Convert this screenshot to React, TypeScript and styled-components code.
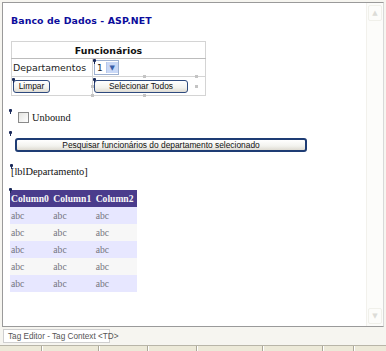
import styled, { createGlobalStyle } from "styled-components";

const Global = createGlobalStyle`
  html, body { margin: 0; padding: 0; }
  body { width: 386px; height: 351px; overflow: hidden; background: #f6f5f0; }
`;

const Window = styled.div`
  width: 386px;
  height: 351px;
  display: flex;
  flex-direction: column;
  box-sizing: border-box;
  padding: 2px 2px 0 2px;
`;

const Editor = styled.div`
  height: 325px;
  box-sizing: border-box;
  border: 1px solid #9a9a9a;
  border-right-color: #d8d8d8;
  background: #fff;
  display: flex;
`;

const Document = styled.div`
  flex: 1;
  padding: 12px 0 0 7px;
  display: flex;
  flex-direction: column;
  align-items: flex-start;
  font-family: "Liberation Serif", serif;
`;

const Scrollbar = styled.div`
  width: 16px;
  background: #fcfcfa;
  border-left: 1px solid #f2f1ec;
  display: flex;
  flex-direction: column;
  justify-content: space-between;
  padding: 2px 0;
`;

const ScrollArrow = styled.div`
  height: 14px;
  margin: 0 1px;
  border: 1px solid #f0f0ea;
  border-radius: 2px;
  display: flex;
  align-items: center;
  justify-content: center;
  color: #dcdcd8;
  font-size: 7px;
  font-family: "DejaVu Sans", sans-serif;
`;

const Title = styled.h1`
  margin: 0;
  font-family: "DejaVu Sans", sans-serif;
  font-size: 9.4px;
  line-height: 12px;
  font-weight: bold;
  letter-spacing: 0.1px;
  color: #0c0c9c;
  padding-left: 1px;
`;

const Anchor = styled.div`
  position: relative;
`;

const Marker = styled.span<{ $x?: number; $y?: number }>`
  position: absolute;
  left: ${p => p.$x ?? -2}px;
  top: ${p => p.$y ?? -3}px;
  width: 3px;
  height: 3px;
  background: #1a2a5a;
  border-radius: 1px;
  &::after {
    content: "";
    position: absolute;
    left: 1px;
    top: 2px;
    width: 1px;
    height: 3px;
    background: #1a2a5a;
  }
`;

const Handle = styled.span<{ $x: number; $y: number }>`
  position: absolute;
  left: ${p => p.$x}px;
  top: ${p => p.$y}px;
  width: 3px;
  height: 3px;
  background: #c4c4c4;
`;

const FormTable = styled.table`
  margin-top: 14px;
  margin-left: 1px;
  width: 195px;
  border-collapse: collapse;
  border: 1px solid #c4c4c4;
  font-family: "DejaVu Sans", sans-serif;
  font-size: 9.4px;
  color: #222;
`;

const Cell = styled.td<{ $h: number }>`
  border: 1px solid #d4d4d4;
  height: ${p => p.$h}px;
  padding: 0 1px;
  position: relative;
  vertical-align: middle;
`;

const HeadCell = styled(Cell)`
  text-align: center;
  font-weight: bold;
  color: #111;
  border-bottom-color: #bcbcbc;
`;

const Select = styled.div`
  display: inline-flex;
  align-items: center;
  height: 13px;
  border: 1px solid #9db0d0;
  background: #fff;
  font-size: 9px;
  padding-left: 2px;
  gap: 3px;
`;

const SelectArrow = styled.span`
  width: 11px;
  height: 11px;
  background: #c9d8f6;
  border-left: 1px solid #b5c6ea;
  color: #3a5ea8;
  font-size: 7px;
  display: flex;
  align-items: center;
  justify-content: center;
`;

const Button = styled.button<{ $w: number; $focus?: boolean }>`
  width: ${p => p.$w}px;
  height: ${p => (p.$focus ? 14 : 13)}px;
  margin: 0;
  padding: 0;
  box-sizing: border-box;
  font-family: "Liberation Sans", sans-serif;
  font-size: 8.4px;
  line-height: 10px;
  color: #111;
  background: linear-gradient(#ffffff, #f2f2ee 60%, #dedbd2);
  border: ${p => (p.$focus ? "2px solid #1e3c74" : "1px solid #2e4a7e")};
  border-radius: 3px;
`;

const CheckRow = styled.label`
  margin-top: 16px;
  margin-left: 8px;
  display: flex;
  align-items: center;
  gap: 3px;
  font-size: 10.4px;
  color: #111;
`;

const Box = styled.span`
  width: 9px;
  height: 9px;
  border: 1px solid #8a8a8a;
  background: linear-gradient(135deg, #e4e4e0, #ffffff);
`;

const WideRow = styled.div`
  margin-top: 11px;
  margin-left: 5px;
`;

const LabelText = styled.div`
  margin-top: 14px;
  margin-left: 1px;
  font-size: 10.4px;
  line-height: 12px;
  color: #111;
`;

const Grid = styled.table`
  margin-top: 12px;
  margin-left: 0;
  border-collapse: collapse;
  width: 127px;
  font-family: "Liberation Serif", serif;
  font-size: 9.6px;
`;

const GridHead = styled.th`
  background: #4a3c8c;
  color: #f7f7f7;
  font-weight: bold;
  height: 17px;
  padding: 0 1px;
  text-align: left;
  white-space: nowrap;
`;

const GridRow = styled.tr<{ $alt: boolean }>`
  background: ${p => (p.$alt ? "#f7f7f7" : "#e7e7ff")};
  color: #74747e;
`;

const GridCell = styled.td`
  height: 17px;
  padding: 0 1px;
`;

const TagBar = styled.div`
  height: 18px;
  display: flex;
  align-items: center;
  padding-left: 1px;
`;

const TagBox = styled.div`
  height: 14px;
  width: 107px;
  box-sizing: border-box;
  border: 1px solid #cfcfcf;
  background: #fff;
  font-family: "Liberation Sans", sans-serif;
  font-size: 8.2px;
  color: #555;
  display: flex;
  align-items: center;
  padding-left: 4px;
  white-space: nowrap;
`;

const StatusBar = styled.div`
  flex: 1;
  margin: 0 -2px;
  background: #ece9d8;
  border-top: 1px solid #b8b5a8;
  display: flex;
`;

const StatusPanel = styled.div<{ $w: number }>`
  width: ${p => p.$w}px;
  border-right: 1px solid #aca899;
  box-shadow: 1px 0 0 #fff;
`;

const rows = [0, 1, 2, 3, 4];
const panels = [41, 56, 48, 48, 65, 59, 30];

export default function App() {
  return (
    <>
      <Global />
      <Window>
        <Editor>
          <Document>
            <Title>Banco de Dados - ASP.NET</Title>

            <Anchor>
              <FormTable>
                <tbody>
                  <tr>
                    <HeadCell $h={16} colSpan={2}>Funcionários</HeadCell>
                  </tr>
                  <tr>
                    <Cell $h={17} style={{ width: 78 }}>Departamentos</Cell>
                    <Cell $h={17}>
                      <Marker $x={0} $y={0} />
                      <Select>
                        1<SelectArrow>▼</SelectArrow>
                      </Select>
                    </Cell>
                  </tr>
                  <tr>
                    <Cell $h={18}>
                      <Marker $x={0} $y={1} />
                      <Button $w={37}>Limpar</Button>
                    </Cell>
                    <Cell $h={18}>
                      <Marker $x={0} $y={1} />
                      <Button $w={94}>Selecionar Todos</Button>
                      <Handle $x={-2} $y={8} />
                      <Handle $x={50} $y={-2} />
                      <Handle $x={102} $y={-2} />
                      <Handle $x={102} $y={8} />
                      <Handle $x={50} $y={17} />
                      <Handle $x={-2} $y={17} />
                    </Cell>
                  </tr>
                </tbody>
              </FormTable>
            </Anchor>

            <Anchor>
              <Marker $x={-1} $y={13} />
              <CheckRow>
                <Box />
                Unbound
              </CheckRow>
            </Anchor>

            <Anchor>
              <Marker $x={-1} $y={8} />
              <WideRow>
                <Button $w={292} $focus>
                  Pesquisar funcionários do departamento selecionado
                </Button>
              </WideRow>
            </Anchor>

            <Anchor>
              <Marker $x={0} $y={12} />
              <LabelText>[lblDepartamento]</LabelText>
            </Anchor>

            <Anchor>
              <Marker $x={-1} $y={10} />
              <Grid>
                <thead>
                  <tr>
                    <GridHead>Column0</GridHead>
                    <GridHead>Column1</GridHead>
                    <GridHead>Column2</GridHead>
                  </tr>
                </thead>
                <tbody>
                  {rows.map(r => (
                    <GridRow key={r} $alt={r % 2 === 1}>
                      <GridCell>abc</GridCell>
                      <GridCell>abc</GridCell>
                      <GridCell>abc</GridCell>
                    </GridRow>
                  ))}
                </tbody>
              </Grid>
            </Anchor>
          </Document>
          <Scrollbar>
            <ScrollArrow>▲</ScrollArrow>
            <ScrollArrow>▼</ScrollArrow>
          </Scrollbar>
        </Editor>
        <TagBar>
          <TagBox>Tag Editor - Tag Context &lt;TD&gt;</TagBox>
        </TagBar>
        <StatusBar>
          {panels.map((w, i) => (
            <StatusPanel key={i} $w={w} />
          ))}
        </StatusBar>
      </Window>
    </>
  );
}
